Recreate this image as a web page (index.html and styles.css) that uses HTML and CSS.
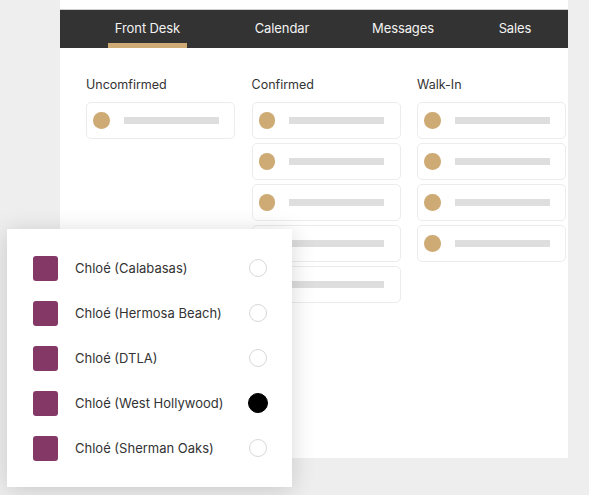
FILE: index.html
```html
<!DOCTYPE html>
<html>
<head>
<meta charset="utf-8">
<link rel="stylesheet" href="styles.css">
</head>
<body>
<div class="panel">
  <div class="topgap"></div>
  <nav class="nav">
    <div class="nav-item active">Front Desk</div>
    <div class="nav-item">Calendar</div>
    <div class="nav-item">Messages</div>
    <div class="nav-item">Sales</div>
  </nav>
  <div class="board">
    <div class="col">
      <div class="col-title">Uncomfirmed</div>
      <div class="cards">
        <div class="card"><span class="dot"></span><span class="bar"></span></div>
      </div>
    </div>
    <div class="col">
      <div class="col-title">Confirmed</div>
      <div class="cards">
        <div class="card"><span class="dot"></span><span class="bar"></span></div>
        <div class="card"><span class="dot"></span><span class="bar"></span></div>
        <div class="card"><span class="dot"></span><span class="bar"></span></div>
        <div class="card"><span class="dot"></span><span class="bar"></span></div>
        <div class="card"><span class="dot"></span><span class="bar"></span></div>
      </div>
    </div>
    <div class="col">
      <div class="col-title">Walk-In</div>
      <div class="cards">
        <div class="card"><span class="dot"></span><span class="bar"></span></div>
        <div class="card"><span class="dot"></span><span class="bar"></span></div>
        <div class="card"><span class="dot"></span><span class="bar"></span></div>
        <div class="card"><span class="dot"></span><span class="bar"></span></div>
      </div>
    </div>
  </div>
</div>
<div class="dropdown">
  <div class="loc"><span class="swatch"></span><span class="loc-name">Chloé (Calabasas)</span><span class="radio"></span></div>
  <div class="loc"><span class="swatch"></span><span class="loc-name">Chloé (Hermosa Beach)</span><span class="radio"></span></div>
  <div class="loc"><span class="swatch"></span><span class="loc-name">Chloé (DTLA)</span><span class="radio"></span></div>
  <div class="loc"><span class="swatch"></span><span class="loc-name">Chloé (West Hollywood)</span><span class="radio checked"></span></div>
  <div class="loc"><span class="swatch"></span><span class="loc-name">Chloé (Sherman Oaks)</span><span class="radio"></span></div>
</div>
</body>
</html>
```
FILE: styles.css
```css
* { box-sizing: border-box; }
html, body { margin: 0; padding: 0; }
body {
  background: #eeeeee;
  width: 589px;
  height: 495px;
  overflow: hidden;
  position: relative;
  font-family: Inter, "Liberation Sans", sans-serif;
  color: #333;
}
.panel {
  margin-left: 60px;
  width: 508px;
  height: 458px;
  background: #fff;
}
.topgap {
  height: 10px;
  border-bottom: 1px solid #cfcfcf;
}
.nav {
  height: 38px;
  background: #333333;
  display: flex;
  align-items: stretch;
  padding-left: 48px;
}
.nav-item {
  width: 79px;
  text-align: center;
  color: #f2f2f2;
  font-size: 13px;
  line-height: 37px;
  position: relative;
  letter-spacing: -0.1px;
}
.nav-item:nth-child(2) { margin-left: 55.5px; }
.nav-item:nth-child(3) { margin-left: 42px; }
.nav-item:nth-child(4) { margin-left: 33px; }
.nav-item.active::after {
  content: "";
  position: absolute;
  left: 0;
  right: 0;
  bottom: 0;
  height: 5px;
  background: #ceaa74;
}
.board {
  display: grid;
  grid-template-columns: 149px 149px 149px;
  column-gap: 16.5px;
  padding: 29px 0 0 26px;
  align-items: start;
}
.col-title {
  font-size: 12.5px;
  line-height: 16px;
  color: #333;
  margin-bottom: 9px;
}
.cards {
  display: flex;
  flex-direction: column;
  gap: 4.3px;
}
.card {
  height: 36.7px;
  border: 1.5px solid #ececec;
  border-radius: 5px;
  display: flex;
  align-items: center;
  padding-left: 6px;
}
.dot {
  width: 16.5px;
  height: 16.5px;
  border-radius: 50%;
  background: #ceaa74;
  flex: none;
}
.bar {
  width: 95px;
  height: 6.5px;
  background: #dedede;
  margin-left: 14px;
}
.dropdown {
  position: absolute;
  left: 7px;
  top: 229px;
  width: 285px;
  height: 258px;
  background: #fff;
  box-shadow: 0 3px 22px rgba(0, 0, 0, 0.16);
  padding: 16.5px 25px 16.5px 26px;
}
.loc {
  height: 45px;
  display: flex;
  align-items: center;
}
.swatch {
  width: 25px;
  height: 25px;
  border-radius: 3px;
  background: #843866;
  flex: none;
}
.loc-name {
  margin-left: 17px;
  font-size: 13px;
  color: #333;
  flex: 1;
}
.radio {
  width: 18px;
  height: 18px;
  border-radius: 50%;
  border: 1.5px solid #d8d8d8;
  flex: none;
}
.radio.checked {
  width: 20px;
  height: 20px;
  margin-right: -1px;
  background: #000;
  border-color: #000;
}
```
